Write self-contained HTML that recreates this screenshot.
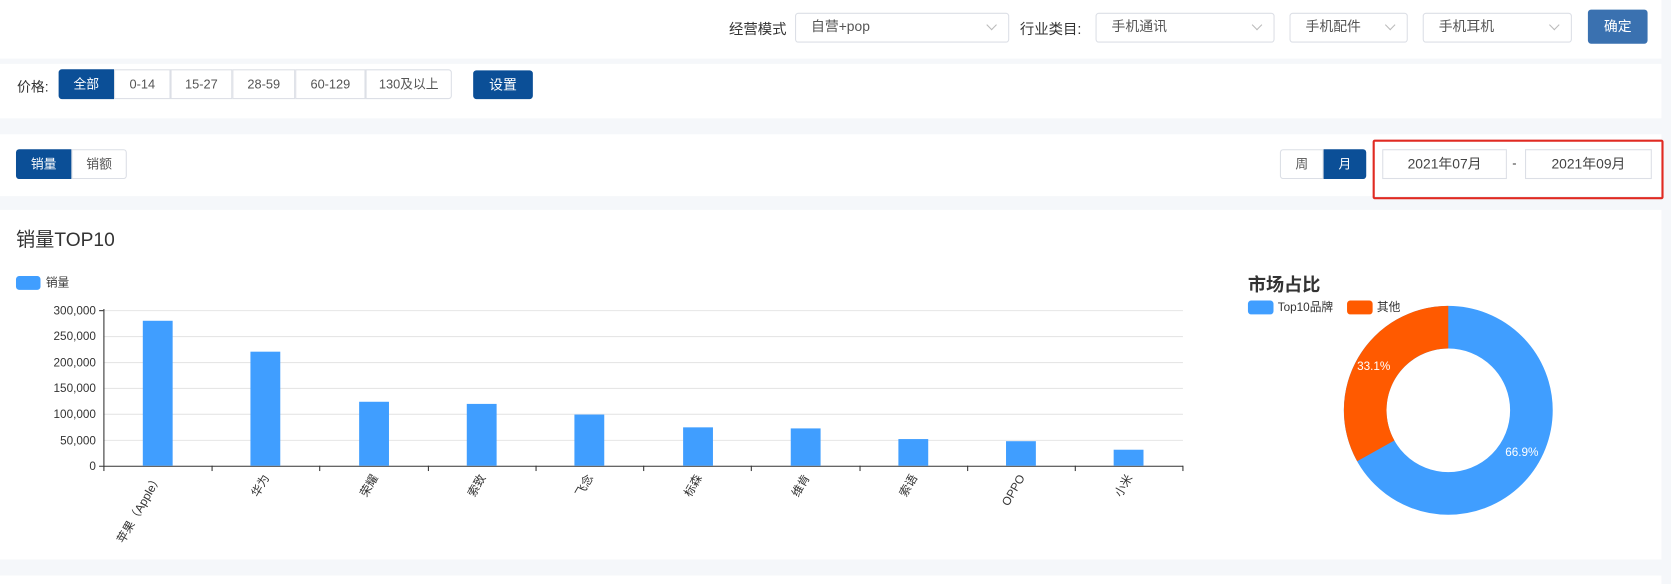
<!DOCTYPE html>
<html><head><meta charset="utf-8"><style>
*{box-sizing:border-box;margin:0;padding:0}
html,body{width:1671px;height:584px;overflow:hidden;background:#f5f7fa}
body{font-family:"Liberation Sans","Noto Sans CJK SC",sans-serif;color:#333}
#w{position:absolute;left:0;top:0;width:1568px;height:548px;transform:scale(1.0657);transform-origin:0 0}
.p{position:absolute;left:0;width:1559px;background:#fff}
.a{position:absolute}
.sel{position:absolute;top:12px;height:28px;border:1px solid #dcdfe6;border-radius:3px;font-size:13px;color:#555;padding:0 14px;line-height:24px;background:#fff}
.sel:after{content:"";position:absolute;right:12px;top:7px;width:6px;height:6px;border-right:1px solid #bbb;border-bottom:1px solid #bbb;transform:rotate(45deg)}
.bt{position:absolute;height:28px;border:1px solid #dcdfe6;font-size:12px;color:#555;text-align:center;line-height:26px;background:#fff}
.on{background:#0b4f97;color:#fff;border-color:#0b4f97}
</style></head><body><div id="w">
<div class="p" style="top:0;height:55px">
<div class="a" style="left:684px;top:16px;font-size:13.5px">经营模式</div>
<div class="sel" style="left:746px;width:201px">自营+pop</div>
<div class="a" style="left:957px;top:16px;font-size:13.5px">行业类目:</div>
<div class="sel" style="left:1028px;width:168px">手机通讯</div>
<div class="sel" style="left:1210px;width:111px">手机配件</div>
<div class="sel" style="left:1335px;width:140px">手机耳机</div>
<div class="a" style="left:1490px;top:9px;width:56px;height:32px;background:#3a71b0;border-radius:3px;color:#fff;font-size:13px;text-align:center;line-height:32px">确定</div>
</div>
<div class="p" style="top:60px;height:51px">
<div class="a" style="left:16px;top:11px;font-size:13px">价格:</div>
<div class="bt on" style="left:55px;top:5px;width:52px;border-radius:3px 0 0 3px">全部</div>
<div class="bt" style="left:107px;top:5px;width:53px">0-14</div>
<div class="bt" style="left:160px;top:5px;width:58px">15-27</div>
<div class="bt" style="left:218px;top:5px;width:59px">28-59</div>
<div class="bt" style="left:277px;top:5px;width:66px">60-129</div>
<div class="bt" style="left:343px;top:5px;width:81px;border-radius:0 3px 3px 0">130及以上</div>
<div class="bt on" style="left:444px;top:6px;width:56px;height:27px;border-radius:3px;font-size:13px">设置</div>
</div>
<div class="p" style="top:126px;height:58px">
<div class="bt on" style="left:15px;top:14px;width:52px;border-radius:3px 0 0 3px">销量</div>
<div class="bt" style="left:67px;top:14px;width:52px;border-radius:0 3px 3px 0">销额</div>
<div class="bt" style="left:1201px;top:14px;width:41px;border-radius:3px 0 0 3px">周</div>
<div class="bt on" style="left:1242px;top:14px;width:40px;border-radius:0 3px 3px 0">月</div>
<div class="bt" style="left:1297px;top:14px;width:117px;font-size:13px;color:#444">2021年07月</div>
<div class="a" style="left:1419px;top:20px;font-size:12px">-</div>
<div class="bt" style="left:1431px;top:14px;width:119px;font-size:13px;color:#444">2021年09月</div>
</div>
<div class="a" style="left:1288px;top:131px;width:273px;height:56px;border:2px solid #e02a22;border-radius:2px"></div>
<div class="p" style="top:197px;height:328px">
<div class="a" style="left:15px;top:14px;font-size:18px">销量TOP10</div>
</div>
<div class="p" style="top:540px;height:8px"></div>
<svg class="a" style="left:0;top:0" width="1568" height="548" font-family="Liberation Sans,Noto Sans CJK SC,sans-serif">
<rect x="15" y="259" width="23" height="13" rx="3" fill="#409eff"/>
<text x="43" y="269" font-size="11" fill="#333">销量</text>
<g stroke="#e6e6e6" stroke-width="1">
<line x1="97" y1="291.5" x2="1110" y2="291.5"/><line x1="97" y1="315.8" x2="1110" y2="315.8"/><line x1="97" y1="340.2" x2="1110" y2="340.2"/><line x1="97" y1="364.5" x2="1110" y2="364.5"/><line x1="97" y1="388.8" x2="1110" y2="388.8"/><line x1="97" y1="413.2" x2="1110" y2="413.2"/></g>
<g font-size="11" fill="#333" text-anchor="end">
<text x="90" y="295">300,000</text><text x="90" y="319">250,000</text><text x="90" y="344">200,000</text><text x="90" y="368">150,000</text><text x="90" y="392">100,000</text><text x="90" y="417">50,000</text><text x="90" y="441">0</text></g>
<g stroke="#333"><line x1="93" y1="437.5" x2="1110" y2="437.5"/>
<line x1="97.5" y1="437" x2="97.5" y2="442"/><line x1="199" y1="437" x2="199" y2="442"/><line x1="300" y1="437" x2="300" y2="442"/><line x1="402" y1="437" x2="402" y2="442"/><line x1="503" y1="437" x2="503" y2="442"/><line x1="604" y1="437" x2="604" y2="442"/><line x1="705" y1="437" x2="705" y2="442"/><line x1="807" y1="437" x2="807" y2="442"/><line x1="908" y1="437" x2="908" y2="442"/><line x1="1009" y1="437" x2="1009" y2="442"/><line x1="1110" y1="437" x2="1110" y2="442"/>
<line x1="93" y1="291.5" x2="97" y2="291.5"/></g>
<line x1="97.5" y1="290" x2="97.5" y2="437" stroke="#333"/>
<g fill="#409eff">
<rect x="134" y="301" width="28" height="136"/><rect x="235" y="330" width="28" height="107"/><rect x="337" y="377" width="28" height="60"/><rect x="438" y="379" width="28" height="58"/><rect x="539" y="389" width="28" height="48"/><rect x="641" y="401" width="28" height="36"/><rect x="742" y="402" width="28" height="35"/><rect x="843" y="412" width="28" height="25"/><rect x="944" y="414" width="28" height="23"/><rect x="1045" y="422" width="28" height="15"/></g>
<g font-size="11" fill="#333" text-anchor="end">
<text transform="translate(152,448) rotate(-60)">苹果（Apple）</text>
<text transform="translate(253,448) rotate(-60)">华为</text>
<text transform="translate(355,448) rotate(-60)">荣耀</text>
<text transform="translate(456,448) rotate(-60)">索致</text>
<text transform="translate(557,448) rotate(-60)">飞念</text>
<text transform="translate(659,448) rotate(-60)">标森</text>
<text transform="translate(760,448) rotate(-60)">维肯</text>
<text transform="translate(861,448) rotate(-60)">索语</text>
<text transform="translate(962,448) rotate(-60)">OPPO</text>
<text transform="translate(1063,448) rotate(-60)">小米</text></g>
<text x="1171" y="273" font-size="17" font-weight="bold" fill="#333">市场占比</text>
<rect x="1171" y="282" width="24" height="13" rx="3" fill="#409eff"/>
<text x="1199" y="292" font-size="11" fill="#333">Top10品牌</text>
<rect x="1264" y="282" width="24" height="13" rx="3" fill="#ff5a00"/>
<text x="1292" y="292" font-size="11" fill="#333">其他</text>
<circle cx="1359" cy="385" r="78" fill="none" stroke="#409eff" stroke-width="40"/>
<path d="M1273.5,432.8 A98,98 0 0 1 1359,287 L1359,327 A58,58 0 0 0 1308.4,413.3 Z" fill="#ff5a00"/>
<text x="1289" y="347" font-size="11" fill="#fff" text-anchor="middle">33.1%</text>
<text x="1428" y="428" font-size="11" fill="#fff" text-anchor="middle">66.9%</text>
</svg>
</div></body></html>
